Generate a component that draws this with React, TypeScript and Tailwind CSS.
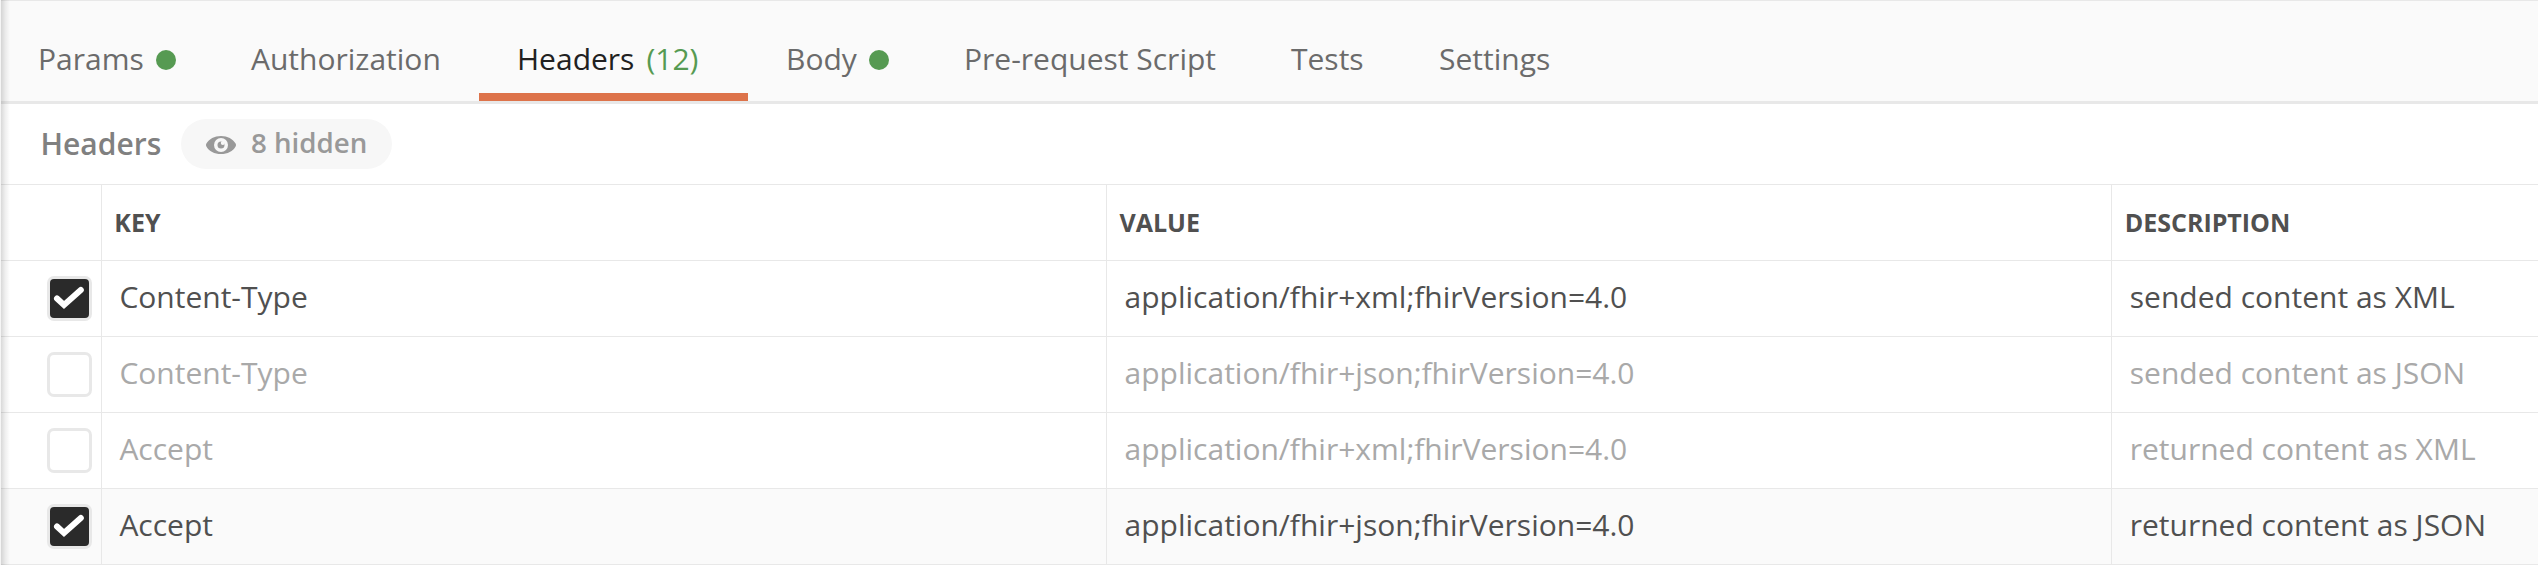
import React from "react";

type Tab = { label: string; width: string; dot?: boolean; count?: string; active?: boolean };

const tabs: Tab[] = [
  { label: "Params", width: "w-[213px]", dot: true },
  { label: "Authorization", width: "w-[266px]" },
  { label: "Headers", width: "w-[269px]", count: "(12)", active: true },
  { label: "Body", width: "w-[178px]", dot: true },
  { label: "Pre-request Script", width: "w-[327px]" },
  { label: "Tests", width: "w-[148px]" },
  { label: "Settings", width: "w-[184px]" },
];

type Row = { key: string; value: string; description: string; enabled: boolean; hovered?: boolean };

const rows: Row[] = [
  { key: "Content-Type", value: "application/fhir+xml;fhirVersion=4.0", description: "sended content as XML", enabled: true },
  { key: "Content-Type", value: "application/fhir+json;fhirVersion=4.0", description: "sended content as JSON", enabled: false },
  { key: "Accept", value: "application/fhir+xml;fhirVersion=4.0", description: "returned content as XML", enabled: false },
  { key: "Accept", value: "application/fhir+json;fhirVersion=4.0", description: "returned content as JSON", enabled: true, hovered: true },
];

const columns = "grid grid-cols-[101px_1005.2px_1005.2px_1fr]";

function TabItem({ tab }: { tab: Tab }) {
  return (
    <div
      className={`${tab.width} flex shrink-0 flex-col whitespace-nowrap ${tab.active ? "text-[#212121]" : "text-[#6b6b6b]"}`}
    >
      <div className="flex h-[92px] items-center pt-[24px] pl-[38px] leading-[40px]">
        <span>{tab.label}</span>
        {tab.dot && <span className="mt-[1px] ml-[12px] size-5 rounded-full bg-[#569a52]" />}
        {tab.count && <span className="ml-[12px] text-[#569a52]">{tab.count}</span>}
      </div>
      {tab.active && <div className="h-2 bg-[#dd734a]" />}
    </div>
  );
}

function Eye() {
  return (
    <svg className="mt-px h-[18px] w-[30px]" viewBox="0 0 30 18">
      <path d="M15 0C8.500 0 3 3 .4 7.600Q-.4 9 .4 10.400C3 15 8.500 18 15 18s12-3 14.600-7.600q.8-1.400 0-2.800C27 3 21.500 0 15 0Z" fill="#999" />
      <circle cx="15" cy="9" r="7" fill="#f7f7f7" />
      <circle cx="15" cy="9" r="3.500" fill="#999" />
      <circle cx="16.800" cy="7.100" r="2" fill="#f7f7f7" />
    </svg>
  );
}

function Checkbox({ checked }: { checked: boolean }) {
  return (
    <div className={`size-[45px] rounded-[7px] border-[3px] border-[#e8e8e8] ${checked ? "bg-[#e8e8e8]" : "bg-white"}`}>
      {checked && (
        <svg className="size-[39px] rounded-[4px] bg-[#2a2a2a]" viewBox="0 0 39 39">
          <path d="M7 19.500 14 26 30.800 11" fill="none" stroke="#fff" strokeWidth="6" strokeLinecap="round" />
        </svg>
      )}
    </div>
  );
}

export default function App() {
  return (
    <div className="relative flex h-[565px] w-[2538px] flex-col overflow-hidden bg-white font-['Open_Sans',sans-serif] text-[30px]">
      <div className="flex h-[104px] border-t border-b-[3px] border-[#e8e8e8] bg-[#fafafa]">
        {tabs.map((tab) => (
          <TabItem key={tab.label} tab={tab} />
        ))}
      </div>

      <div className="flex h-20 items-center pl-[40.5px] font-semibold">
        <span className="w-[140.5px] pb-[2px] text-[#808080]">Headers</span>
        <div className="flex h-[50px] w-[211px] items-center rounded-full bg-[#f7f7f7] pl-[25px] text-[27.7px] text-[#999]">
          <Eye />
          <span className="ml-[15px] pb-[2px] whitespace-nowrap">8 hidden</span>
        </div>
      </div>

      <div className={`${columns} h-[76px] border-t border-[#e8e8e8] text-[25px] font-bold text-[#505050]`}>
        <div />
        {["KEY", "VALUE", "DESCRIPTION"].map((name) => (
          <div key={name} className="flex items-center border-l border-[#e8e8e8] pl-[12.3px]">
            {name}
          </div>
        ))}
      </div>

      {rows.map((row, i) => (
        <div
          key={i}
          className={`${columns} h-[76px] shrink-0 border-t border-[#e8e8e8] ${row.hovered ? "bg-[#fafafa]" : ""} ${row.enabled ? "text-[#505050]" : "text-[#a9a9a9]"}`}
        >
          <div className="pt-[15px] pl-[47px]">
            <Checkbox checked={row.enabled} />
          </div>
          {[row.key, row.value, row.description].map((text) => (
            <div key={text} className="flex items-center border-l border-[#e8e8e8] pb-1 pl-[17.4px] whitespace-nowrap">
              {text}
            </div>
          ))}
        </div>
      ))}
      <div className="h-px shrink-0 bg-[#e8e8e8]" />

      <div className="absolute inset-y-0 left-0 w-[10px] border-l border-[#f5f5f5] bg-linear-to-r from-black/15 via-black/6 to-transparent" />
    </div>
  );
}
